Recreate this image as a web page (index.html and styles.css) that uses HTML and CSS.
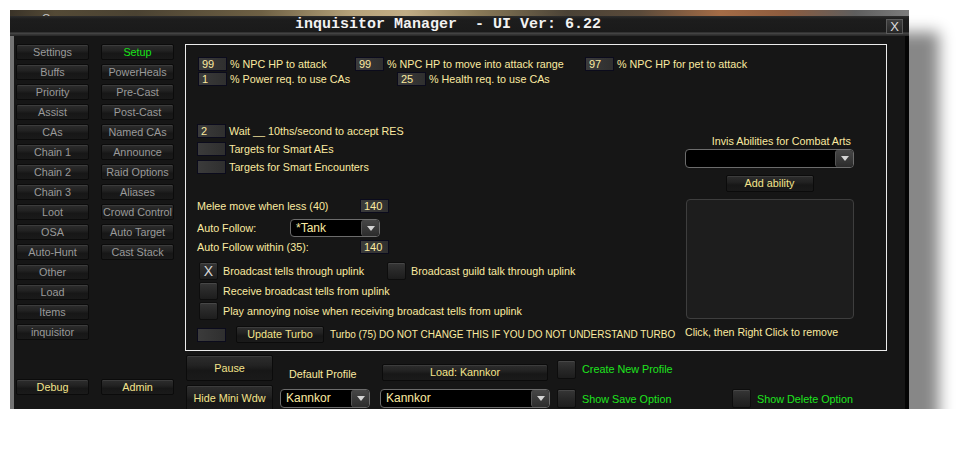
FILE: index.html
```html
<!DOCTYPE html>
<html>
<head>
<meta charset="utf-8">
<title>inquisitor Manager</title>
<link rel="stylesheet" href="styles.css">
</head>
<body>
<div class="window">
  <div class="topstrip"><span class="group">Group</span></div>
  <div class="titlebar">
    <div class="title">inquisitor Manager &nbsp;- UI Ver: 6.22</div>
    <div class="close">X</div>
  </div>
  <div class="body">
    <nav class="nav">
      <div class="navcol">
        <div class="btn">Settings</div>
        <div class="btn">Buffs</div>
        <div class="btn">Priority</div>
        <div class="btn">Assist</div>
        <div class="btn">CAs</div>
        <div class="btn">Chain 1</div>
        <div class="btn">Chain 2</div>
        <div class="btn">Chain 3</div>
        <div class="btn">Loot</div>
        <div class="btn">OSA</div>
        <div class="btn">Auto-Hunt</div>
        <div class="btn">Other</div>
        <div class="btn">Load</div>
        <div class="btn">Items</div>
        <div class="btn">inquisitor</div>
        <div class="btn yel foot">Debug</div>
      </div>
      <div class="navcol">
        <div class="btn green">Setup</div>
        <div class="btn">PowerHeals</div>
        <div class="btn">Pre-Cast</div>
        <div class="btn">Post-Cast</div>
        <div class="btn">Named CAs</div>
        <div class="btn">Announce</div>
        <div class="btn">Raid Options</div>
        <div class="btn">Aliases</div>
        <div class="btn">Crowd Control</div>
        <div class="btn">Auto Target</div>
        <div class="btn">Cast Stack</div>
        <div class="btn yel foot">Admin</div>
      </div>
    </nav>
    <div class="main">
      <section class="panel">
        <div class="row r1">
          <div class="grp g157"><div class="inp">99</div><span class="lbl">% NPC HP to attack</span></div>
          <div class="grp g230"><div class="inp">99</div><span class="lbl">% NPC HP to move into attack range</span></div>
          <div class="grp"><div class="inp">97</div><span class="lbl">% NPC HP for pet to attack</span></div>
        </div>
        <div class="row r2">
          <div class="grp g199"><div class="inp">1</div><span class="lbl">% Power req. to use CAs</span></div>
          <div class="grp"><div class="inp">25</div><span class="lbl">% Health req. to use CAs</span></div>
        </div>
        <div class="split">
          <div class="leftcol">
            <div class="row"><div class="inp">2</div><span class="lbl">Wait __ 10ths/second to accept RES</span></div>
            <div class="row gap4"><div class="inp"></div><span class="lbl">Targets for Smart AEs</span></div>
            <div class="row gap4"><div class="inp"></div><span class="lbl">Targets for Smart Encounters</span></div>

            <div class="row melee"><span class="lbl w163">Melee move when less (40)</span><div class="inp">140</div></div>
            <div class="row follow"><span class="lbl w93">Auto Follow:</span>
              <div class="dd w90"><span class="dd-text">*Tank</span><span class="dd-btn"><i class="tri"></i></span></div>
            </div>
            <div class="row within"><span class="lbl w163">Auto Follow within (35):</span><div class="inp">140</div></div>

            <div class="cbrow first">
              <div class="grp g188"><div class="cb">X</div><span class="lbl">Broadcast tells through uplink</span></div>
              <div class="grp"><div class="cb"></div><span class="lbl">Broadcast guild talk through uplink</span></div>
            </div>
            <div class="cbrow">
              <div class="grp"><div class="cb"></div><span class="lbl">Receive broadcast tells from uplink</span></div>
            </div>
            <div class="cbrow">
              <div class="grp"><div class="cb"></div><span class="lbl">Play annoying noise when receiving broadcast tells from uplink</span></div>
            </div>
            <div class="row turbo">
              <div class="inp"></div>
              <div class="btn yel tbtn">Update Turbo</div>
              <span class="lbl turbotxt">Turbo (75) DO NOT CHANGE THIS IF YOU DO NOT UNDERSTAND TURBO</span>
            </div>
          </div>
          <div class="rightcol">
            <div class="lbl invis">Invis Abilities for Combat Arts</div>
            <div class="dd full"><span class="dd-text"></span><span class="dd-btn"><i class="tri"></i></span></div>
            <div class="btn yel addbtn">Add ability</div>
            <div class="listbox"></div>
            <div class="lbl hint">Click, then Right Click to remove</div>
          </div>
        </div>
      </section>
      <div class="bottom">
        <div class="btn yel big pause">Pause</div>
        <div class="lbl defprof">Default Profile</div>
        <div class="btn yel loadbtn">Load: Kannkor</div>
        <div class="opt create"><div class="cb sq"></div><span class="gl">Create New Profile</span></div>
        <div class="btn yel big hide">Hide Mini Wdw</div>
        <div class="dd w90 lowdd dd1"><span class="dd-text">Kannkor</span><span class="dd-btn"><i class="tri"></i></span></div>
        <div class="dd w170 lowdd dd2"><span class="dd-text">Kannkor</span><span class="dd-btn"><i class="tri"></i></span></div>
        <div class="opt low save"><div class="cb sq"></div><span class="gl">Show Save Option</span></div>
        <div class="opt low del"><div class="cb sq"></div><span class="gl">Show Delete Option</span></div>
      </div>
    </div>
  </div>
</div>
</body>
</html>
```

FILE: styles.css
```css
* { box-sizing: border-box; }
html, body { margin: 0; padding: 0; background: #ffffff; }
body {
  padding: 10px 0 0 10px;
  font-family: "Liberation Sans", Arial, sans-serif;
  font-size: 11px;
}
.window {
  width: 899px;
  height: 399px;
  background: #161616;
  box-shadow: 30px 22px 14px rgba(0, 0, 0, 0.47);
  overflow: hidden;
  display: flex;
  flex-direction: column;
}
.topstrip {
  height: 6px;
  flex: none;
  overflow: hidden;
  padding-left: 32px;
  background: linear-gradient(90deg, #3a3328 0%, #544a36 5%, #4a4232 14%, #6e6044 28%, #b5a27a 38%, #c2ae86 44%, #8a7a58 52%, #4a4236 62%, #5a4a3a 70%, #a46c46 79%, #8e5c3e 86%, #5e5e5e 94%, #7c7c7c 100%);
}
.group {
  display: block;
  color: #c4c4c4;
  font-size: 11px;
  line-height: 12px;
  padding-top: 2px;
}
.titlebar {
  height: 20px;
  flex: none;
  display: flex;
  background: linear-gradient(#2c2c2c 0, #1d1d1d 3px, #1a1a1a 16px, #4c4c4c 17px, #3a3a3a 18px, #262626 20px);
}
.title {
  margin-left: 285px;
  font-family: "Liberation Mono", "Courier New", monospace;
  font-weight: bold;
  font-size: 15px;
  line-height: 18px;
  color: #f2f2f2;
  white-space: pre;
}
.close {
  margin: 3px 6px 0 auto;
  width: 17px;
  height: 15px;
  border: 1px solid #5a5a5a;
  background: linear-gradient(#3e3e3e, #262626);
  color: #dcdcdc;
  font-size: 13px;
  line-height: 13px;
  text-align: center;
}
.body {
  flex: 1;
  display: flex;
  border-left: 4px solid #747474;
  border-right: 4px solid #050505;
  padding-top: 8px;
  min-height: 0;
}
.nav {
  display: flex;
  gap: 12px;
  padding: 0 0 14px 2px;
  margin-right: 11px;
}
.navcol {
  display: flex;
  flex-direction: column;
  gap: 4px;
  width: 73px;
}
.btn {
  height: 16px;
  line-height: 14px;
  text-align: center;
  white-space: nowrap;
  border: 1px solid #0b0b0b;
  border-radius: 2px;
  background: linear-gradient(#2d2d2d, #222 40%, #171717 60%, #1a1a1a);
  box-shadow: inset 0 1px 0 #3c3c3c;
  color: #9a9a9a;
  font-size: 10.8px;
}
.btn.green { color: #18e418; }
.btn.yel { color: #f4e48c; }
.btn.foot { margin-top: auto; }

.main {
  flex: 1;
  display: flex;
  flex-direction: column;
}
.panel {
  width: 702px;
  height: 307px;
  flex: none;
  border: 1px solid #ececec;
  display: flex;
  flex-direction: column;
  padding-top: 12px;
}
.lbl {
  color: #fbeaa0;
  font-size: 10.75px;
  line-height: 14px;
  white-space: nowrap;
}
.row {
  display: flex;
  align-items: center;
  height: 14px;
  white-space: nowrap;
}
.grp { display: flex; align-items: center; flex: none; }
.g157 { width: 157px; }
.g230 { width: 230px; }
.g199 { width: 199px; }
.g188 { width: 188px; }
.r1, .r2 { padding-left: 12px; }
.r2 { margin-top: 1px; }
.inp {
  width: 29px;
  height: 14px;
  flex: none;
  border: 1px solid #0b0b1c;
  background: linear-gradient(90deg, #3b3b3b, #2f2f2f);
  color: #fbeaa0;
  padding-left: 3px;
  font-size: 11px;
  line-height: 12px;
}
.inp + .lbl { margin-left: 3px; }
.split {
  display: flex;
  flex: 1;
}
.leftcol {
  width: 499px;
  flex: none;
  padding: 38px 0 0 11px;
  display: flex;
  flex-direction: column;
}
.gap4 { margin-top: 4px; }
.w163 { width: 163px; }
.w93 { width: 93px; }
.w90 { width: 90px; }
.w170 { width: 170px; }
.melee { margin-top: 25px; }
.follow { margin-top: 6px; height: 18px; }
.within { margin-top: 3px; }
.dd {
  display: flex;
  height: 18px;
  flex: none;
  border: 1px solid #6c6c6c;
  border-radius: 4px;
  background: #000;
  overflow: hidden;
}
.dd-text {
  flex: 1;
  color: #fbeaa0;
  padding-left: 5px;
  font-size: 12px;
  line-height: 16px;
  white-space: nowrap;
}
.dd-btn {
  width: 18px;
  flex: none;
  border-left: 1px solid #555;
  border-radius: 3px;
  background: linear-gradient(#474747, #2c2c2c);
  display: flex;
  align-items: center;
  justify-content: center;
}
.tri {
  display: block;
  width: 0;
  height: 0;
  border-left: 4px solid transparent;
  border-right: 4px solid transparent;
  border-top: 5px solid #d4d4d4;
}
.cbrow {
  display: flex;
  align-items: center;
  height: 18px;
  margin-top: 2px;
  padding-left: 2px;
}
.cbrow.first { margin-top: 8px; }
.cb {
  width: 19px;
  height: 18px;
  flex: none;
  border: 1px solid #0d0d0d;
  border-radius: 2px;
  background: linear-gradient(#363636, #282828 50%, #1d1d1d);
  box-shadow: inset 0 1px 0 #474747;
  color: #d8d8d8;
  text-align: center;
  font-size: 14px;
  line-height: 16px;
}
.cb + .lbl { margin-left: 5px; }
.turbo { margin-top: 6px; height: 17px; }
.tbtn {
  width: 88px;
  height: 17px;
  margin-left: 10px;
  line-height: 15px;
}
.tbtn + .lbl { margin-left: 6px; }
.turbotxt { font-size: 10px; }

.rightcol {
  width: 169px;
  flex: none;
  display: flex;
  flex-direction: column;
  padding-top: 48px;
}
.invis { text-align: right; padding-right: 3px; }
.dd.full { width: 169px; height: 19px; margin-top: 1px; }
.addbtn {
  width: 88px;
  height: 17px;
  line-height: 15px;
  margin: 7px auto 0;
}
.listbox {
  height: 120px;
  margin: 7px 0 0 1px;
  border: 1px solid #3e3e3e;
  border-radius: 4px;
  background: #1d1d1d;
}
.hint { margin-top: 6px; font-size: 10.6px; }

.bottom {
  display: grid;
  grid-template-columns: 95px 100px 177px 175px 1fr;
  grid-template-rows: 26px 24px;
  row-gap: 4px;
  margin-top: 4px;
}
.pause { grid-column: 1; grid-row: 1; }
.defprof { grid-column: 2; grid-row: 1; align-self: end; padding-left: 9px; }
.loadbtn { grid-column: 3; grid-row: 1; }
.create { grid-column: 4; grid-row: 1; }
.hide { grid-column: 1; grid-row: 2; }
.dd1 { grid-column: 2; grid-row: 2; }
.dd2 { grid-column: 3; grid-row: 2; }
.save { grid-column: 4; grid-row: 2; }
.del { grid-column: 5; grid-row: 2; }
.big {
  width: 87px;
  height: 26px;
  line-height: 24px;
  margin-left: 1px;
}
.loadbtn {
  align-self: end;
  width: 166px;
  height: 17px;
  line-height: 15px;
  margin-left: 2px;
}
.opt { display: flex; align-items: center; }
.opt.create { padding-top: 2px; }
.opt.low { align-self: start; margin-top: 4px; }
.cb.sq { height: 19px; }
.gl {
  color: #1ee41e;
  font-size: 10.8px;
  line-height: 14px;
  margin-left: 6px;
  white-space: nowrap;
}
.lowdd { height: 19px; margin-top: 4px; align-self: start; }
```
